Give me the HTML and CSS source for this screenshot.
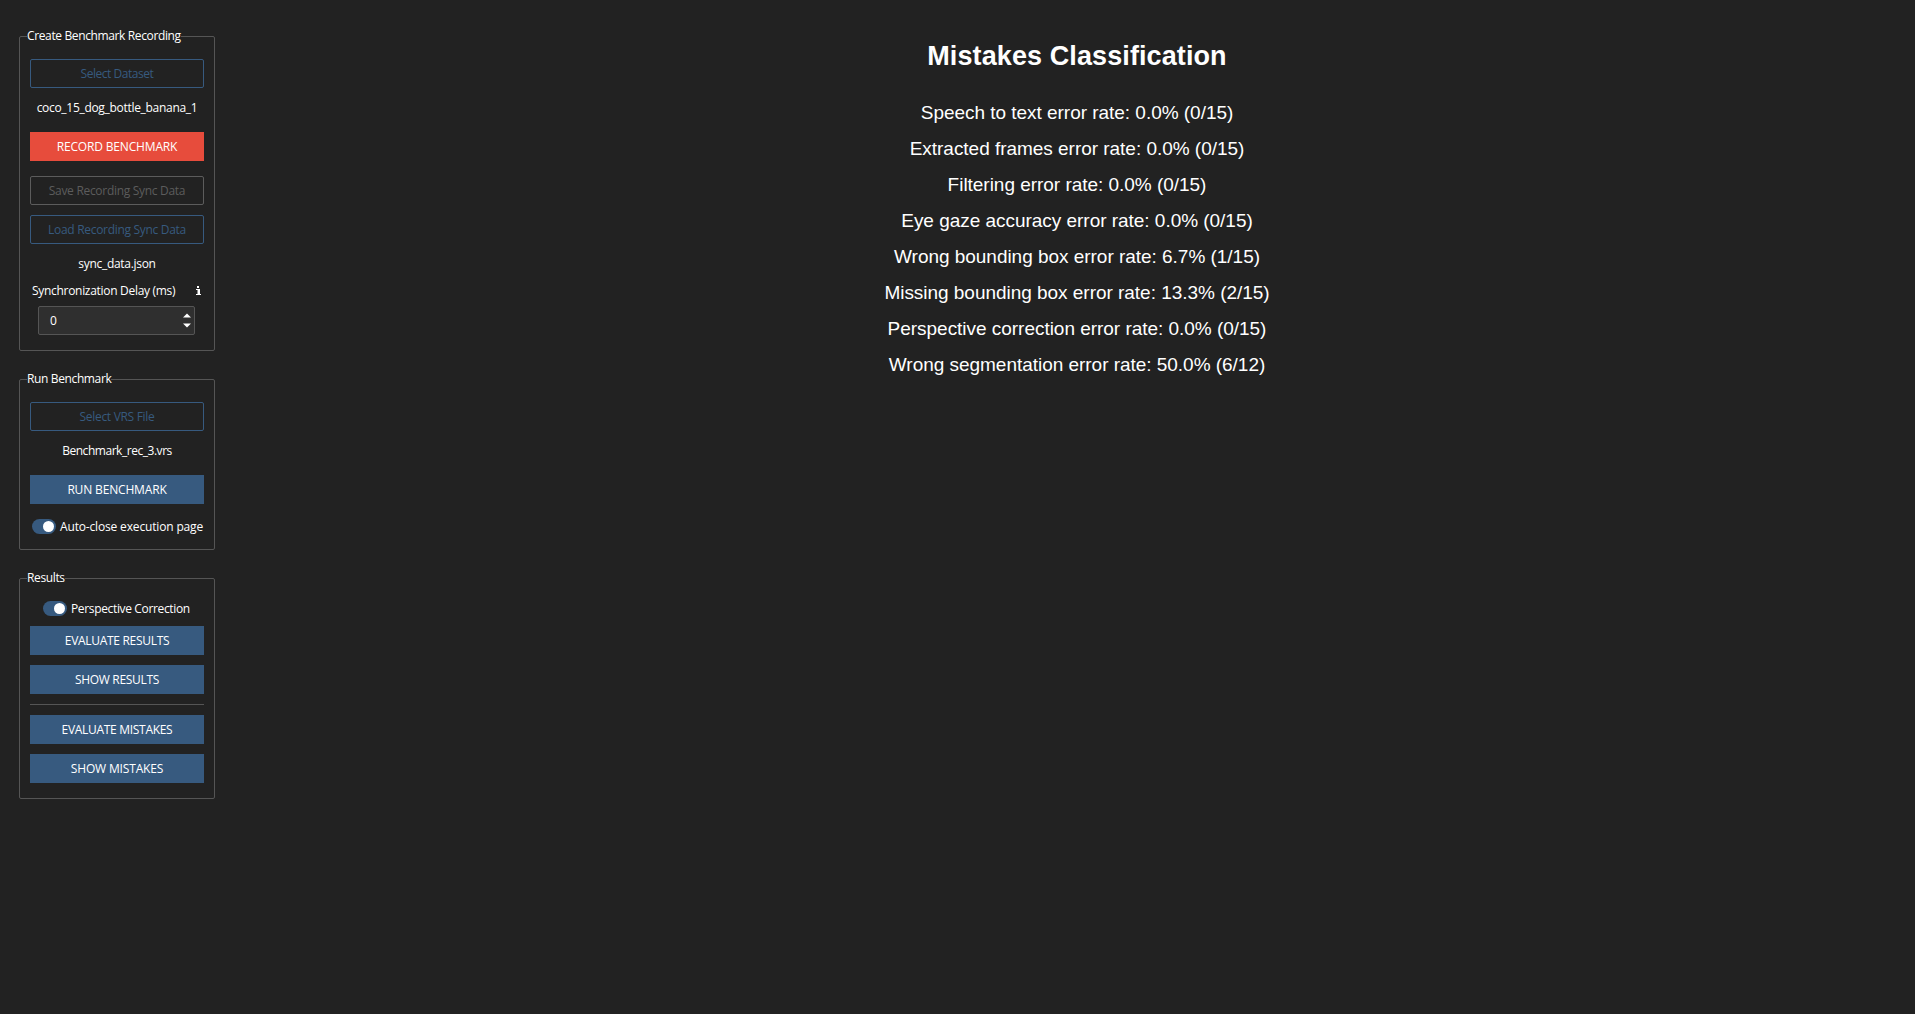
FILE: index.html
```html
<!DOCTYPE html>
<html lang="en">
<head>
<meta charset="utf-8">
<title>Benchmark</title>
<link rel="stylesheet" href="styles.css">
</head>
<body>
<div class="app">
  <aside class="sidebar">
    <section class="group group-record">
      <h2 class="legend">Create Benchmark Recording</h2>
      <button class="btn outline tight">Select Dataset</button>
      <p class="file dataset">coco_15_dog_bottle_banana_1</p>
      <button class="btn danger wide">RECORD BENCHMARK</button>
      <button class="btn outline disabled">Save Recording Sync Data</button>
      <button class="btn outline load">Load Recording Sync Data</button>
      <p class="file sync">sync_data.json</p>
      <div class="delay"><span>Synchronization Delay (ms)</span>
        <svg class="info" width="5" height="9" viewBox="0 0 5 9"><path d="M1 0h2v2H1zM0 3h4v5h1v1H0V8h1.500V4H0z" fill="#fff"/></svg>
      </div>
      <div class="spin"><span>0</span>
        <svg width="8" height="15" viewBox="0 0 8 15"><path d="M0 4.500 4 .5l4 4zM0 10.500l4 4 4-4z" fill="#fff"/></svg>
      </div>
    </section>
    <section class="group group-run">
      <h2 class="legend">Run Benchmark</h2>
      <button class="btn outline">Select VRS File</button>
      <p class="file tight">Benchmark_rec_3.vrs</p>
      <button class="btn wide">RUN BENCHMARK</button>
      <label class="toggle wide"><i class="switch"></i><span>Auto-close execution page</span></label>
    </section>
    <section class="group group-results">
      <h2 class="legend">Results</h2>
      <label class="toggle"><i class="switch"></i><span>Perspective Correction</span></label>
      <button class="btn">EVALUATE RESULTS</button>
      <button class="btn">SHOW RESULTS</button>
      <hr class="rule">
      <button class="btn">EVALUATE MISTAKES</button>
      <button class="btn wide">SHOW MISTAKES</button>
    </section>
  </aside>
  <main class="report">
    <h1 class="title">Mistakes Classification</h1>
    <p class="rate">Speech to text error rate: 0.0% (0/15)</p>
    <p class="rate">Extracted frames error rate: 0.0% (0/15)</p>
    <p class="rate">Filtering error rate: 0.0% (0/15)</p>
    <p class="rate">Eye gaze accuracy error rate: 0.0% (0/15)</p>
    <p class="rate">Wrong bounding box error rate: 6.7% (1/15)</p>
    <p class="rate">Missing bounding box error rate: 13.3% (2/15)</p>
    <p class="rate">Perspective correction error rate: 0.0% (0/15)</p>
    <p class="rate">Wrong segmentation error rate: 50.0% (6/12)</p>
  </main>
</div>
</body>
</html>
```
FILE: styles.css
```css
* { box-sizing: border-box; }
body { margin: 0; background: #222; color: #fff; font: 12px/16px "Open Sans", "Noto Sans", sans-serif; }
h1, h2, p { margin: 0; font-weight: 400; }
.app { display: flex; height: 1014px; overflow: hidden; }
.sidebar { width: 196px; margin: 36px 0 0 19px; display: flex; flex-direction: column; flex: none; }
.group { display: flex; flex-direction: column; padding: 0 10px; border: 1px solid #555; border-radius: 2px; white-space: nowrap; letter-spacing: -0.3px; }
.group-record { height: 315px; margin-bottom: 28px; }
.group-run { height: 171px; margin-bottom: 28px; }
.group-results { height: 221px; }
.legend { font-size: 12px; line-height: 16px; margin: -9px 0 15px -3px; background: #222; align-self: flex-start; letter-spacing: -0.37px; }
.btn { flex: none; height: 29px; padding: 1px 0 0; border: 0; background: #375a7f; color: #fff; font: inherit; letter-spacing: inherit; text-align: center; }
.outline { background: transparent; border: 1px solid #375a7f; border-radius: 2px; color: #375a7f; }
.danger { background: #e74c3c; margin-bottom: 15px; }
.disabled { border-color: #5c5c5c; color: #5c5c5c; }
.load { margin-top: 10px; }
.tight { letter-spacing: -0.46px; }
.wide { letter-spacing: -0.16px; }
.file { text-align: center; height: 16px; margin: 12px 0 16px; }
.file.sync { margin: 12px 0 9px; }
.delay { display: flex; justify-content: space-between; align-items: center; padding: 2px 3px 0 2px; height: 17px; }
.info { margin-bottom: 1px; }
.spin { display: flex; justify-content: space-between; align-items: center; height: 29px; margin: 8px 9px 0 8px; padding: 0 3px 0 11px; border: 1px solid #555; border-radius: 2px; background: #2f2f2f; }
.toggle { display: flex; align-items: flex-start; gap: 4px; height: 16px; }
.switch { width: 24px; height: 15px; border-radius: 8px; background: #375a7f; display: flex; justify-content: flex-end; align-items: center; padding-right: 2px; }
.switch::before { content: ""; width: 11px; height: 11px; border-radius: 50%; background: #fff; }
.group-run .toggle { margin: 15px 0 0 2px; }
.group-results .toggle { margin: 0 0 9px 13px; letter-spacing: -0.35px; }
.group-results .btn + .btn { margin-top: 10px; }
.rule { flex: none; width: 100%; height: 1px; border: 0; margin: 10px 0; background: #555; }
.report { flex: 1; display: flex; flex-direction: column; align-items: center; padding: 38px 0 0 24px; font-family: "Liberation Sans", Arial, sans-serif; }
.title { font-size: 27px; line-height: 36px; font-weight: 700; margin-bottom: 21px; letter-spacing: 0.1px; }
.rate { font-size: 19px; line-height: 36px; letter-spacing: -0.03px; }
```
